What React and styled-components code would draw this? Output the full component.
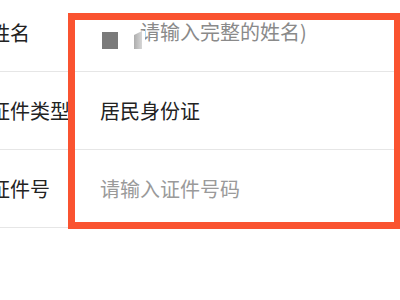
import React from "react";
import styled, { createGlobalStyle } from "styled-components";

const GlobalStyle = createGlobalStyle`
  html, body {
    margin: 0;
    padding: 0;
    background: #ffffff;
    overflow: hidden;
  }
  body {
    font-family: "Noto Sans CJK SC", "Noto Sans", sans-serif;
  }
`;

const Page = styled.div`
  position: relative;
  width: 400px;
  height: 300px;
  overflow: hidden;
  background: #ffffff;
`;

const List = styled.div`
  margin-top: -6px;
  margin-left: -10px;
  width: 410px;
`;

const Row = styled.div`
  display: flex;
  align-items: center;
  height: 77px;
  border-bottom: 1px solid #e6e6e6;
`;

const Label = styled.div`
  width: 110px;
  flex-shrink: 0;
  font-size: 20px;
  color: #222222;
  white-space: nowrap;
`;

const Value = styled.div`
  display: flex;
  align-items: center;
  font-size: 20px;
  color: ${(p) => (p.$placeholder ? "#9a9a9a" : "#222222")};
  white-space: nowrap;
`;

const Square = styled.span`
  width: 16px;
  height: 17px;
  margin-left: 2px;
  margin-top: 15px;
  background: #7a7a7a;
`;

const Wedge = styled.svg`
  position: relative;
  z-index: 1;
  margin-left: 16px;
  margin-right: -5px;
  margin-top: 15px;
  background: #ffffff;
`;

const Hint = styled.span`
  color: #8a8a8a;
  margin-top: -2px;
`;

const Highlight = styled.div`
  position: absolute;
  left: 68px;
  top: 13px;
  width: 333px;
  height: 216px;
  box-sizing: border-box;
  border: 7px solid #fa5330;
  pointer-events: none;
`;

export default function App() {
  return (
    <Page>
      <GlobalStyle />
      <List>
        <Row>
          <Label>姓名</Label>
          <Value>
            <Square />
            <Wedge width="11" height="18" viewBox="0 0 11 18">
              <defs>
                <linearGradient id="wedgeFade" x1="0" y1="0" x2="1" y2="0">
                  <stop offset="0" stopColor="#adadad" />
                  <stop offset="1" stopColor="#d6d6d6" />
                </linearGradient>
              </defs>
              <polygon points="0,4 8,0 8,18 0,18" fill="url(#wedgeFade)" />
            </Wedge>
            <Hint>请输入完整的姓名)</Hint>
          </Value>
        </Row>
        <Row>
          <Label>证件类型</Label>
          <Value>居民身份证</Value>
        </Row>
        <Row>
          <Label>证件号</Label>
          <Value $placeholder>请输入证件号码</Value>
        </Row>
      </List>
      <Highlight />
    </Page>
  );
}
